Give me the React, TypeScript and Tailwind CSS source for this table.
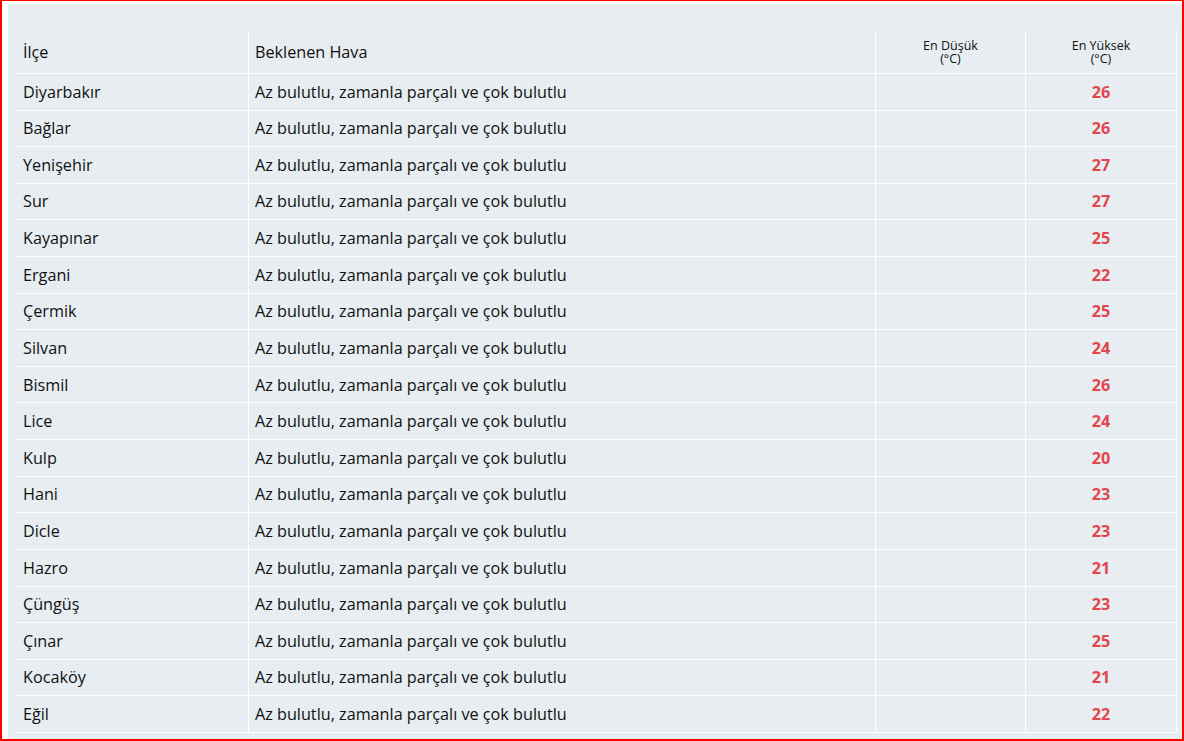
import React from 'react';

const rows: [string, number][] = [
    ['Diyarbakır', 26],
    ['Bağlar', 26],
    ['Yenişehir', 27],
    ['Sur', 27],
    ['Kayapınar', 25],
    ['Ergani', 22],
    ['Çermik', 25],
    ['Silvan', 24],
    ['Bismil', 26],
    ['Lice', 24],
    ['Kulp', 20],
    ['Hani', 23],
    ['Dicle', 23],
    ['Hazro', 21],
    ['Çüngüş', 23],
    ['Çınar', 25],
    ['Kocaköy', 21],
    ['Eğil', 22]
];

const forecast = 'Az bulutlu, zamanla parçalı ve çok bulutlu';

export default function App() {
    return (
        <div
            className="w-[1184px] h-[741px] bg-white border-x-2 border-b-2 border-t border-[#ff0000] pl-[6px] pt-[3px] overflow-hidden text-[#111]"
            style={{ fontFamily: '"Open Sans", "Noto Sans", sans-serif' }}
        >
            <div className="h-[735px] bg-[#e7edf0] border-t border-[#f2f5f7] pt-[26px] pl-[8px] pr-[5px]">
                {/* header */}
                <div className="grid grid-cols-[233px_627px_150px_151px] h-[43px] border-b border-white">
                    <div className="border-r border-white flex items-center pl-[7px] text-[16.2px]">İlçe</div>
                    <div className="border-r border-white flex items-center pl-[6px] text-[16.2px]">Beklenen Hava</div>
                    <div className="border-r border-white flex flex-col items-center justify-center text-[12.5px] leading-[13px]">
                        <span>En Düşük</span>
                        <span>(°C)</span>
                    </div>
                    <div className="border-r border-white flex flex-col items-center justify-center text-[12.5px] leading-[13px]">
                        <span>En Yüksek</span>
                        <span>(°C)</span>
                    </div>
                </div>
                {rows.map(([name, max]) => (
                    <div
                        key={name}
                        className="grid grid-cols-[233px_627px_150px_151px] h-[36.61px] border-b border-white text-[16.2px]"
                    >
                        <div className="border-r border-white flex items-center pl-[7px]">{name}</div>
                        <div className="border-r border-white flex items-center pl-[6px]">{forecast}</div>
                        <div className="border-r border-white" />
                        <div className="border-r border-white flex items-center justify-center font-bold text-[#e2464c]">
                            {max}
                        </div>
                    </div>
                ))}
            </div>
        </div>
    );
}
